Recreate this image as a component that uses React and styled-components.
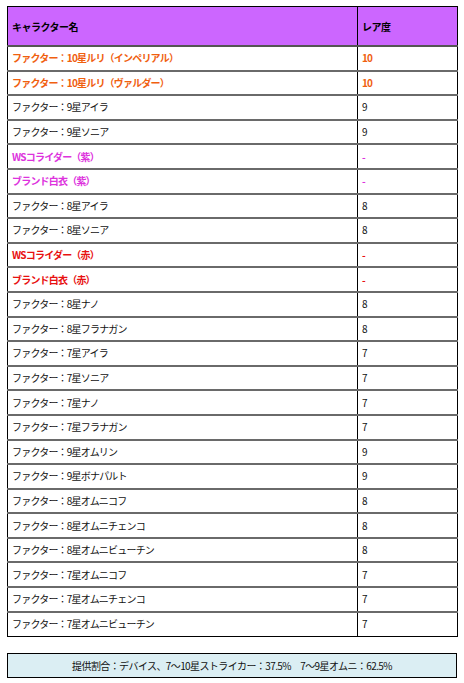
import React from "react";
import styled, { createGlobalStyle } from "styled-components";

const Global = createGlobalStyle`
  html, body { margin: 0; padding: 0; background: #fff; }
  body { font-family: "Noto Sans CJK JP", "Liberation Sans", sans-serif; }
`;

const Page = styled.div`
  width: 464px;
  padding: 6px 7px 0 7px;
  box-sizing: border-box;
  display: flex;
  flex-direction: column;
  gap: 16px;
`;

const Table = styled.table`
  width: 450px;
  border-collapse: collapse;
  border: 1px solid #000;
  table-layout: fixed;
`;

const HeadCell = styled.th`
  background: #cc66ff;
  height: 38px;
  padding: 0 4px;
  text-align: left;
  font-size: 10px;
  font-weight: bold;
  color: #000;
  border-bottom: 2px solid #555;
  border-right: ${(p) => (p.$divider ? "1px solid #000" : "none")};
  letter-spacing: -0.5px;
`;

const tone = {
  normal: { color: "#111", weight: "normal" },
  orange: { color: "#f0600f", weight: "bold" },
  magenta: { color: "#dd33dd", weight: "bold" },
  red: { color: "#e81010", weight: "bold" },
};

const Row = styled.tr`
  height: 24.6px;
  border-bottom: 2px solid #6a6a6a;
  &:last-child { border-bottom: none; }
`;

const Cell = styled.td`
  padding: 0 4px;
  font-size: 10px;
  line-height: 12px;
  letter-spacing: -0.8px;
  color: ${(p) => tone[p.$tone].color};
  font-weight: ${(p) => tone[p.$tone].weight};
  border-right: ${(p) => (p.$divider ? "1px solid #000" : "none")};
  white-space: nowrap;
`;

const Footer = styled.div`
  width: 450px;
  height: 25px;
  box-sizing: border-box;
  border: 1px solid #000;
  background: #dbeef3;
  display: flex;
  align-items: center;
  justify-content: center;
  font-size: 10px;
  color: #111;
  letter-spacing: -0.6px;
`;

const rows = [
  ["ファクター：10星ルリ（インペリアル）", "10", "orange"],
  ["ファクター：10星ルリ（ヴァルダー）", "10", "orange"],
  ["ファクター：9星アイラ", "9", "normal"],
  ["ファクター：9星ソニア", "9", "normal"],
  ["WSコライダー（紫）", "-", "magenta"],
  ["ブランド白衣（紫）", "-", "magenta"],
  ["ファクター：8星アイラ", "8", "normal"],
  ["ファクター：8星ソニア", "8", "normal"],
  ["WSコライダー（赤）", "-", "red"],
  ["ブランド白衣（赤）", "-", "red"],
  ["ファクター：8星ナノ", "8", "normal"],
  ["ファクター：8星フラナガン", "8", "normal"],
  ["ファクター：7星アイラ", "7", "normal"],
  ["ファクター：7星ソニア", "7", "normal"],
  ["ファクター：7星ナノ", "7", "normal"],
  ["ファクター：7星フラナガン", "7", "normal"],
  ["ファクター：9星オムリン", "9", "normal"],
  ["ファクター：9星ボナパルト", "9", "normal"],
  ["ファクター：8星オムニコフ", "8", "normal"],
  ["ファクター：8星オムニチェンコ", "8", "normal"],
  ["ファクター：8星オムニビューチン", "8", "normal"],
  ["ファクター：7星オムニコフ", "7", "normal"],
  ["ファクター：7星オムニチェンコ", "7", "normal"],
  ["ファクター：7星オムニビューチン", "7", "normal"],
];

export default function App() {
  return (
    <>
      <Global />
      <Page>
        <Table>
          <colgroup>
            <col style={{ width: "350px" }} />
            <col style={{ width: "100px" }} />
          </colgroup>
          <thead>
            <tr>
              <HeadCell $divider>キャラクター名</HeadCell>
              <HeadCell>レア度</HeadCell>
            </tr>
          </thead>
          <tbody>
            {rows.map(([name, rare, t]) => (
              <Row key={name}>
                <Cell $tone={t} $divider>{name}</Cell>
                <Cell $tone={t}>{rare}</Cell>
              </Row>
            ))}
          </tbody>
        </Table>
        <Footer>提供割合：デバイス、7～10星ストライカー：37.5%　7～9星オムニ：62.5%</Footer>
      </Page>
    </>
  );
}
